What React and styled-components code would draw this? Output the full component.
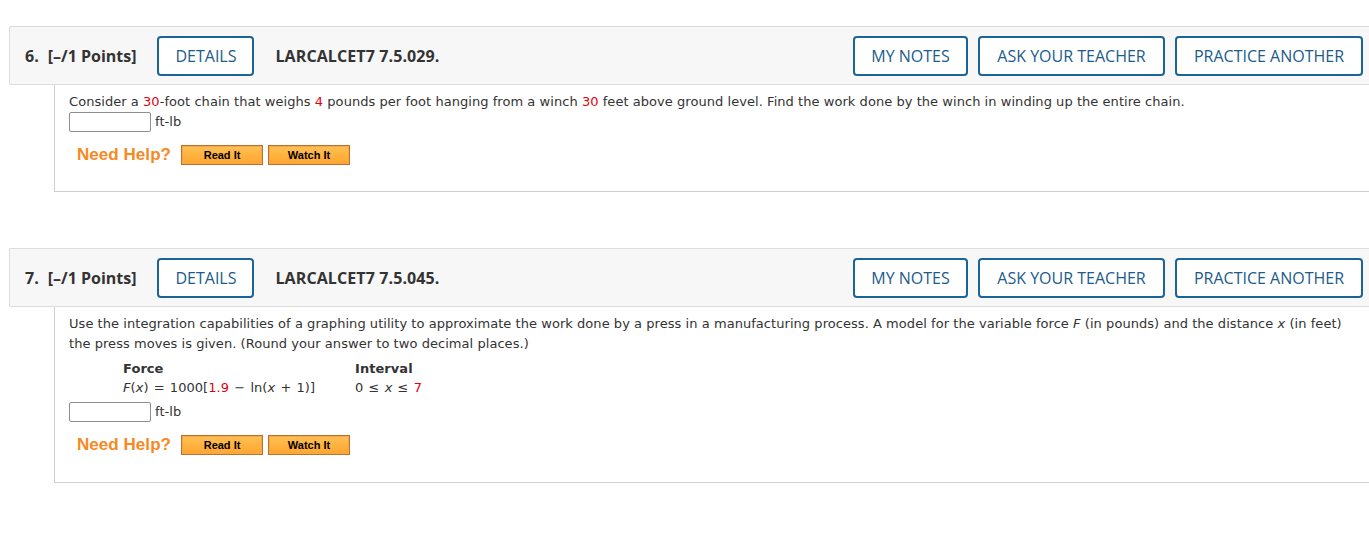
import React from "react";
import styled, { createGlobalStyle } from "styled-components";

const Global = createGlobalStyle`
  html, body { margin: 0; padding: 0; background: #fff; }
  body { overflow-x: hidden; font-family: "DejaVu Sans", Verdana, sans-serif; color: #333; }
`;

const Page = styled.div`
  padding-top: 26px;
  display: flex;
  flex-direction: column;
  gap: 56px;
`;

const Question = styled.section`
  margin-left: 9px;
`;

const Header = styled.div`
  height: 57px;
  box-sizing: content-box;
  display: flex;
  align-items: center;
  background: #f7f7f7;
  border: 1px solid #dcdcdc;
  border-right: none;
  border-top-left-radius: 2px;
  border-bottom-left-radius: 2px;
  padding: 0 6px 0 15px;
  font-family: "Open Sans", sans-serif;
`;

const Num = styled.span`
  font-size: 16px;
  font-weight: 700;
  color: #333;
  margin-right: 9px;
`;

const Points = styled.span`
  font-size: 16px;
  font-weight: 700;
  color: #333;
  margin-right: 21px;
`;

const OutlineButton = styled.button`
  height: 40px;
  width: ${(p) => p.$w}px;
  box-sizing: border-box;
  padding: 0;
  border: 2px solid #1b6496;
  border-radius: 4px;
  background: #fff;
  color: #215b8b;
  font-family: "Open Sans", sans-serif;
  font-size: 16px;
  font-weight: 400;
  cursor: pointer;
  white-space: nowrap;
`;

const Code = styled.span`
  margin-left: 21px;
  font-size: 16px;
  font-weight: 700;
  color: #333;
  letter-spacing: 0.1px;
`;

const Actions = styled.div`
  margin-left: auto;
  display: flex;
  gap: 10px;
`;

const Body = styled.div`
  margin-left: 45px;
  border-left: 1px solid #cfcfcf;
  border-bottom: 1px solid #cfcfcf;
  padding: 7px 0 0 14px;
  height: ${(p) => p.$h}px;
  box-sizing: border-box;
  font-size: 13px;
  line-height: 19.5px;
  letter-spacing: 0.05px;
  color: #333;
`;

const Para = styled.p`
  margin: 0;
  padding-right: 20px;
`;

const Red = styled.span`
  color: #e3000f;
`;

const Var = styled.i`
  font-style: italic;
`;

const AnswerRow = styled.div`
  display: flex;
  align-items: center;
  gap: 4px;
  margin-top: ${(p) => p.$mt || 0}px;
`;

const Input = styled.input`
  width: 82px;
  height: 20px;
  box-sizing: border-box;
  border: 1px solid #8f8f8f;
  border-radius: 2px;
  background: #fff;
  padding: 0;
`;

const Unit = styled.span`
  font-size: 13px;
`;

const HelpRow = styled.div`
  display: flex;
  align-items: center;
  margin-top: ${(p) => p.$mt || 0}px;
  margin-left: 8px;
  gap: 5px;
`;

const HelpLabel = styled.span`
  font-family: "Liberation Sans", Arial, sans-serif;
  font-weight: 700;
  font-size: 17px;
  color: #f7891f;
  margin-right: 5px;
`;

const HelpButton = styled.button`
  width: 82px;
  height: 20px;
  box-sizing: border-box;
  border: 1px solid #c0702a;
  box-shadow: inset 0 0 0 1px #f3a64a;
  background: linear-gradient(#ffc155, #ffa52c);
  font-family: "Liberation Sans", Arial, sans-serif;
  font-weight: 700;
  font-size: 11px;
  color: #000;
  padding: 0;
  cursor: pointer;
`;

const Table = styled.div`
  display: grid;
  grid-template-columns: 232px auto;
  margin: 6px 0 0 54px;
  line-height: 19px;
`;

const Th = styled.div`
  font-weight: 700;
`;

const Formula = styled.div`
  word-spacing: 1px;
`;

function QHeader({ num, code }) {
  return (
    <Header>
      <Num>{num}.</Num>
      <Points>[–/1 Points]</Points>
      <OutlineButton $w={97}>DETAILS</OutlineButton>
      <Code>{code}</Code>
      <Actions>
        <OutlineButton $w={115}>MY NOTES</OutlineButton>
        <OutlineButton $w={187}>ASK YOUR TEACHER</OutlineButton>
        <OutlineButton $w={188}>PRACTICE ANOTHER</OutlineButton>
      </Actions>
    </Header>
  );
}

function Help({ mt }) {
  return (
    <HelpRow $mt={mt}>
      <HelpLabel>Need Help?</HelpLabel>
      <HelpButton>Read It</HelpButton>
      <HelpButton>Watch It</HelpButton>
    </HelpRow>
  );
}

export default function App() {
  return (
    <>
      <Global />
      <Page>
        <Question>
          <QHeader num={6} code="LARCALCET7 7.5.029." />
          <Body $h={107}>
            <Para>
              Consider a <Red>30</Red>-foot chain that weighs <Red>4</Red> pounds per foot hanging from a winch <Red>30</Red> feet above ground level. Find the work done by the winch in winding up the entire chain.
            </Para>
            <AnswerRow>
              <Input />
              <Unit>ft-lb</Unit>
            </AnswerRow>
            <Help mt={13} />
          </Body>
        </Question>
        <Question>
          <QHeader num={7} code="LARCALCET7 7.5.045." />
          <Body $h={176}>
            <Para>
              Use the integration capabilities of a graphing utility to approximate the work done by a press in a manufacturing process. A model for the variable force <Var>F</Var> (in pounds) and the distance <Var>x</Var> (in feet) the press moves is given. (Round your answer to two decimal places.)
            </Para>
            <Table>
              <Th>Force</Th>
              <Th>Interval</Th>
              <Formula>
                <Var>F</Var>(<Var>x</Var>) = 1000[<Red>1.9</Red> − ln(<Var>x</Var> + 1)]
              </Formula>
              <Formula>
                0 ≤ <Var>x</Var> ≤ <Red>7</Red>
              </Formula>
            </Table>
            <AnswerRow $mt={5}>
              <Input />
              <Unit>ft-lb</Unit>
            </AnswerRow>
            <Help mt={13} />
          </Body>
        </Question>
      </Page>
    </>
  );
}
